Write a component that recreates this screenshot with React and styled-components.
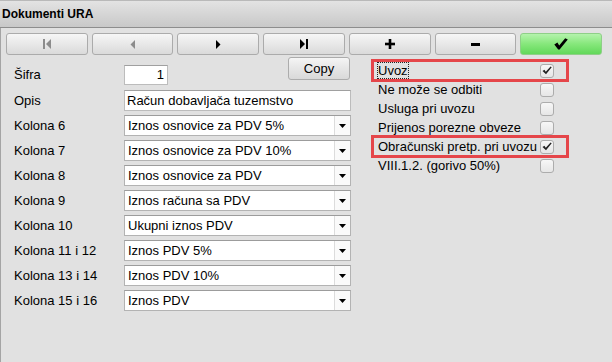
import React from 'react';
import styled, { createGlobalStyle, css } from 'styled-components';

const Global = createGlobalStyle`
  html, body { margin: 0; padding: 0; }
  body {
    width: 612px; height: 362px; overflow: hidden; background: #e1e1e1;
    font-family: "Liberation Sans", Arial, sans-serif; color: #000;
  }
`;

const Window = styled.div`
  width: 612px; height: 362px; display: flex; flex-direction: column;
`;

const TitleBar = styled.div`
  flex: none; box-sizing: border-box; height: 28px; padding-left: 2px;
  display: flex; align-items: center;
  background: linear-gradient(#e3e3e3, #c8c8c8);
  border-top: 1px solid #b9b9b9; border-bottom: 1px solid #8d8d8d;
  font-size: 12px; font-weight: bold;
`;

const Body = styled.div`
  flex: 1; border-left: 1px solid #a4a4a4; background: #e1e1e1;
  padding: 5px 10px 0 5px;
`;

const Toolbar = styled.div`
  display: grid; grid-template-columns: repeat(7, 1fr); gap: 4px; height: 22px;
`;

const ToolButton = styled.div`
  box-sizing: border-box; border-radius: 3px; border: 1px solid #ababab;
  display: flex; align-items: center; justify-content: center;
  background: linear-gradient(#f6f6f6, #e8e8e8 50%, #dadada);
  ${p => p.$ok && css`
    border-color: #8fcf88;
    background: linear-gradient(#b4f3ac, #86e77b 50%, #62d85a);
  `}
`;

const Content = styled.div`
  display: flex; margin-top: 2px;
`;

const Form = styled.div`
  width: 337px; margin-left: 8px; display: flex; flex-direction: column; gap: 4px;
`;

const FirstRow = styled.div`
  display: flex; align-items: flex-start; height: 29px;
`;

const Row = styled.div`
  display: flex; align-items: center; height: 21px;
`;

const Label = styled.div`
  width: 110px; flex: none; font-size: 13px; line-height: 21px;
  ${p => p.$top && css`margin-top: 7px;`}
`;

const Field = styled.div`
  box-sizing: border-box; height: ${p => p.$h || 21}px; width: ${p => p.$w}px;
  border: 1px solid #bcbcbc; border-top-color: #a0a0a0; background: #fff;
  font-size: 13px; line-height: ${p => (p.$h || 21) - 2}px; padding: 0 3px 0 2px;
  white-space: nowrap; overflow: hidden;
  text-align: ${p => p.$align || 'left'};
  ${p => p.$top && css`margin-top: 8px;`}
`;

const CopyButton = styled.div`
  margin-left: auto; margin-right: 1px; box-sizing: border-box; width: 62px; height: 23px;
  border: 1px solid #acacac; border-radius: 3px;
  background: linear-gradient(#f5f5f5, #e6e6e6 50%, #d9d9d9);
  font-size: 13px; display: flex; align-items: center; justify-content: center;
`;

const Select = styled.div`
  box-sizing: border-box; width: 227px; height: 21px; display: flex;
  border: 1px solid #b3b3b3; border-top-color: #9c9c9c; background: #fff;
`;

const SelectText = styled.div`
  flex: 1; font-size: 13px; line-height: 19px; padding-left: 3px; white-space: nowrap; overflow: hidden;
`;

const SelectArrow = styled.div`
  width: 15px; border-left: 1px solid #dcdcdc; background: #fafafa;
  display: flex; align-items: center; justify-content: center;
`;

const Options = styled.div`
  width: 194px; margin-left: 22px; margin-top: 4px; display: flex; flex-direction: column;
`;

const OptionRow = styled.div`
  display: flex; align-items: center; height: 19px; padding: 0 13px 0 5px;
  ${p => p.$marked && css`
    outline: 3px solid #e5464a; outline-offset: -1px;
  `}
`;

const OptionText = styled.span`
  flex: 1; font-size: 13px; line-height: 15px; white-space: nowrap;
  ${p => p.$focus && css`
    flex: none; margin-right: auto; outline: 1px dotted #222; outline-offset: 0;
  `}
`;

const Box = styled.div`
  box-sizing: border-box; width: 14px; height: 14px; flex: none;
  border: 1px solid #acacac; border-radius: 3px;
  background: linear-gradient(#f7f7f7, #e6e6e6);
  display: flex; align-items: center; justify-content: center;
`;

const First = () => (
  <svg width="8" height="10" viewBox="0 0 8 10"><rect x="0" y="0" width="2" height="10" fill="#8c8c8c" /><polygon points="8,0 3,5 8,10" fill="#8c8c8c" /></svg>
);
const Prev = () => (
  <svg width="5" height="9" viewBox="0 0 5 9"><polygon points="5,0 0.5,4.5 5,9" fill="#8c8c8c" /></svg>
);
const Next = () => (
  <svg width="5" height="9" viewBox="0 0 5 9"><polygon points="0,0 4.5,4.5 0,9" fill="#000" /></svg>
);
const Last = () => (
  <svg width="8" height="10" viewBox="0 0 8 10"><polygon points="0,0 5,5 0,10" fill="#000" /><rect x="6" y="0" width="2" height="10" fill="#000" /></svg>
);
const Plus = () => (
  <svg width="10" height="10" viewBox="0 0 10 10"><rect x="3.7" y="0" width="2.6" height="10" fill="#000" /><rect x="0" y="3.7" width="10" height="2.6" fill="#000" /></svg>
);
const Minus = () => (
  <svg width="9" height="3" viewBox="0 0 9 3"><rect x="0" y="0" width="9" height="3" fill="#000" /></svg>
);
const OkCheck = () => (
  <svg width="14" height="12" viewBox="0 0 14 12"><path d="M0.3 6.6 L3.4 4.6 L5.2 7.4 L11.2 0.2 L13.8 1.4 L5.6 11.6 L4.2 11.6 Z" fill="#000" /></svg>
);
const SmallCheck = () => (
  <svg width="10" height="9" viewBox="0 0 10 9"><path d="M0.5 5 L2.4 3.8 L3.8 5.8 L8.6 0.4 L9.7 1.3 L4 8.3 Z" fill="#222" /></svg>
);
const Arrow = () => (
  <svg width="7" height="4" viewBox="0 0 7 4"><polygon points="0,0 7,0 3.5,4" fill="#000" /></svg>
);

const columns = [
  ['Kolona 6', 'Iznos osnovice za PDV 5%'],
  ['Kolona 7', 'Iznos osnovice za PDV 10%'],
  ['Kolona 8', 'Iznos osnovice za PDV'],
  ['Kolona 9', 'Iznos računa sa PDV'],
  ['Kolona 10', 'Ukupni iznos PDV'],
  ['Kolona 11 i 12', 'Iznos PDV 5%'],
  ['Kolona 13 i 14', 'Iznos PDV 10%'],
  ['Kolona 15 i 16', 'Iznos PDV'],
];

const options = [
  { text: 'Uvoz', checked: true, marked: true, focus: true },
  { text: 'Ne može se odbiti' },
  { text: 'Usluga pri uvozu' },
  { text: 'Prijenos porezne obveze' },
  { text: 'Obračunski pretp. pri uvozu', checked: true, marked: true },
  { text: 'VIII.1.2. (gorivo 50%)' },
];

export default function App() {
  return (
    <Window>
      <Global />
      <TitleBar>Dokumenti URA</TitleBar>
      <Body>
        <Toolbar>
          <ToolButton><First /></ToolButton>
          <ToolButton><Prev /></ToolButton>
          <ToolButton><Next /></ToolButton>
          <ToolButton><Last /></ToolButton>
          <ToolButton><Plus /></ToolButton>
          <ToolButton><Minus /></ToolButton>
          <ToolButton $ok><OkCheck /></ToolButton>
        </Toolbar>
        <Content>
          <Form>
            <FirstRow>
              <Label $top>Šifra</Label>
              <Field $w={44} $h={20} $align="right" $top>1</Field>
              <CopyButton>Copy</CopyButton>
            </FirstRow>
            <Row>
              <Label>Opis</Label>
              <Field $w={227}>Račun dobavljača tuzemstvo</Field>
            </Row>
            {columns.map(([l, v]) => (
              <Row key={l}>
                <Label>{l}</Label>
                <Select>
                  <SelectText>{v}</SelectText>
                  <SelectArrow><Arrow /></SelectArrow>
                </Select>
              </Row>
            ))}
          </Form>
          <Options>
            {options.map(o => (
              <OptionRow key={o.text} $marked={o.marked}>
                <OptionText $focus={o.focus}>{o.text}</OptionText>
                <Box>{o.checked && <SmallCheck />}</Box>
              </OptionRow>
            ))}
          </Options>
        </Content>
      </Body>
    </Window>
  );
}
